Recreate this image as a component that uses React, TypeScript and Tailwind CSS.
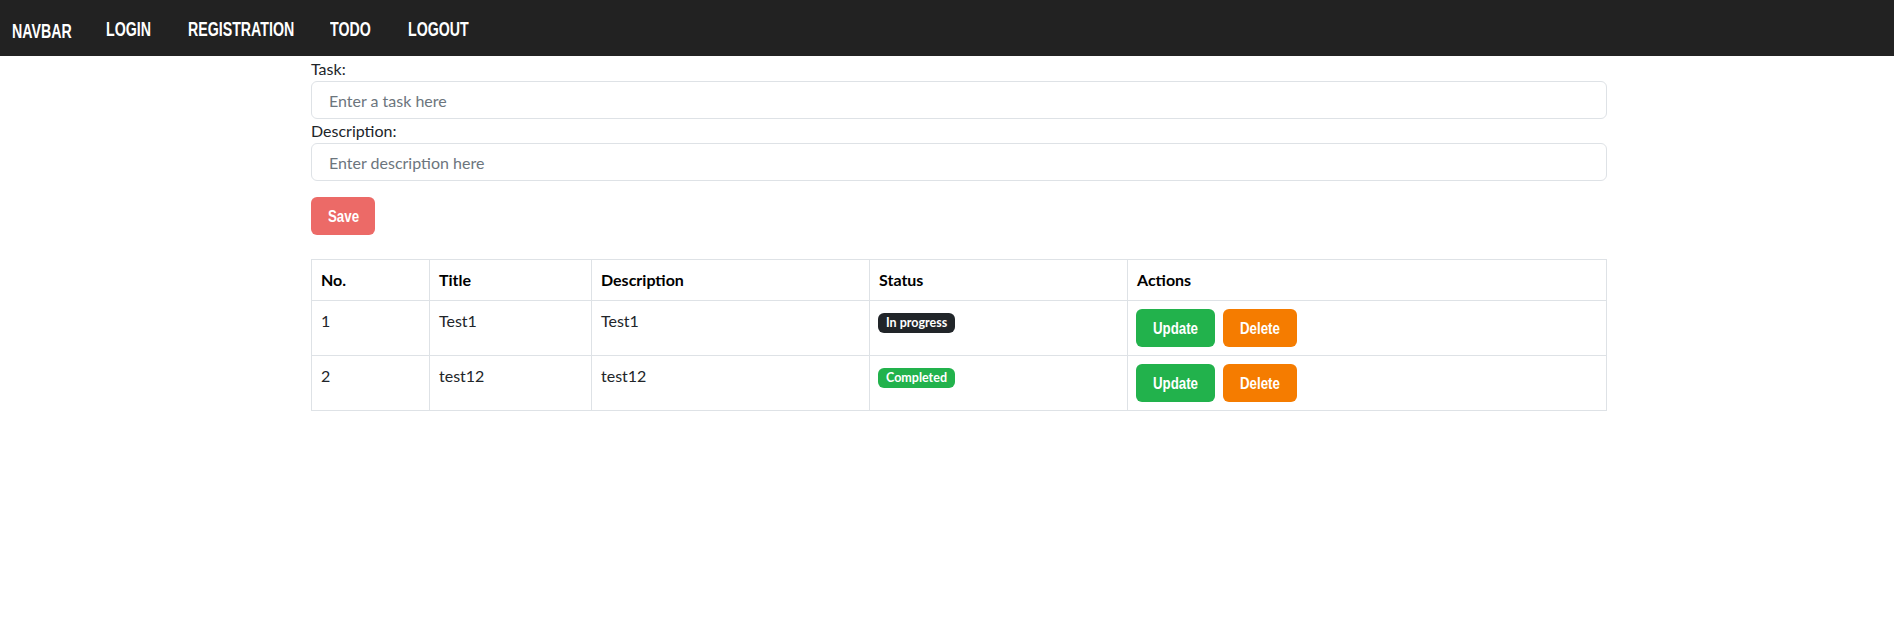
import React from "react";

function Narrow({ w, scale, children }: { w: string; scale: "nav" | "btn"; children: React.ReactNode }) {
  return (
    <span className={`inline-block overflow-visible whitespace-nowrap ${w}`}>
      <span
        className={
          scale === "nav"
            ? "inline-block origin-left scale-x-[0.71] font-['Liberation_Sans',sans-serif] font-bold"
            : "inline-block origin-left scale-x-[0.83] font-['Liberation_Sans',sans-serif] font-bold"
        }
      >
        {children}
      </span>
    </span>
  );
}

function Nav() {
  return (
    <nav className="h-[56px] bg-[#222222] flex items-center pl-[12px] text-white text-[20px]">
      <span className="mt-[4px] mr-[34px]">
        <Narrow w="w-[60px]" scale="nav">NAVBAR</Narrow>
      </span>
      <span className="mr-[37px]">
        <Narrow w="w-[45px]" scale="nav">LOGIN</Narrow>
      </span>
      <span className="mr-[36px]">
        <Narrow w="w-[106px]" scale="nav">REGISTRATION</Narrow>
      </span>
      <span className="mr-[36px]">
        <Narrow w="w-[42px]" scale="nav">TODO</Narrow>
      </span>
      <span>
        <Narrow w="w-[62px]" scale="nav">LOGOUT</Narrow>
      </span>
    </nav>
  );
}

function BtnText({ w, children }: { w: string; children: React.ReactNode }) {
  return <Narrow w={w} scale="btn">{children}</Narrow>;
}

const rows = [
  { no: 1, title: "Test1", desc: "Test1", status: "In progress" },
  { no: 2, title: "test12", desc: "test12", status: "Completed" },
];

export default function App() {
  return (
    <div className="min-h-[617px] bg-white text-[#212529] font-['Lato','Noto_Sans',sans-serif] text-[16px]">
      <Nav />
      <div className="w-[1320px] mx-auto pl-[24px]">
        <label className="block leading-[24px] mt-[1px]">Task:</label>
        <input
          className="block w-full h-[38px] border border-[#dee2e6] rounded-[6px] px-[17px] placeholder:text-[#6c757d] outline-none"
          placeholder="Enter a task here"
        />
        <label className="block leading-[24px]">Description:</label>
        <input
          className="block w-full h-[38px] border border-[#dee2e6] rounded-[6px] px-[17px] placeholder:text-[#6c757d] outline-none"
          placeholder="Enter description here"
        />
        <button className="mt-[16px] h-[38px] w-[64px] rounded-[6px] bg-[#ec6a67] text-white text-[16px] flex items-center justify-center">
          <BtnText w="w-[31px]">Save</BtnText>
        </button>
        <table className="mt-[24px] w-[1296px] border-collapse border border-[#dee2e6] table-fixed">
          <colgroup>
            <col className="w-[118px]" />
            <col className="w-[162px]" />
            <col className="w-[278px]" />
            <col className="w-[258px]" />
            <col />
          </colgroup>
          <thead>
            <tr className="h-[41px]">
              {["No.", "Title", "Description", "Status", "Actions"].map((h) => (
                <th key={h} className="border border-[#dee2e6] px-[9px] py-[8px] text-left font-bold text-black leading-[24px]">
                  {h}
                </th>
              ))}
            </tr>
          </thead>
          <tbody>
            {rows.map((r) => (
              <tr key={r.no} className="h-[55px]">
                <td className="border border-[#dee2e6] px-[9px] py-[8px] align-top leading-[24px]">{r.no}</td>
                <td className="border border-[#dee2e6] px-[9px] py-[8px] align-top leading-[24px]">{r.title}</td>
                <td className="border border-[#dee2e6] px-[9px] py-[8px] align-top leading-[24px]">{r.desc}</td>
                <td className="border border-[#dee2e6] px-[8px] py-[8px] align-top leading-[24px]">
                  <span
                    className={
                      r.status === "In progress"
                        ? "inline-flex items-center h-[20px] px-[8px] rounded-[6px] bg-[#212529] text-white text-[12.5px] font-bold leading-none align-[2px] mt-[4px]"
                        : "inline-flex items-center h-[20px] px-[8px] rounded-[6px] bg-[#22b24c] text-white text-[12.5px] font-bold leading-none align-[2px] mt-[4px]"
                    }
                  >
                    {r.status}
                  </span>
                </td>
                <td className="border border-[#dee2e6] px-[8px] py-[8px] align-top">
                  <div className="flex gap-[8px]">
                    <button className="h-[38px] w-[79px] rounded-[6px] bg-[#22b24c] text-white text-[16px] flex items-center justify-center">
                      <BtnText w="w-[46px]">Update</BtnText>
                    </button>
                    <button className="h-[38px] w-[74px] rounded-[6px] bg-[#f57c00] text-white text-[16px] flex items-center justify-center">
                      <BtnText w="w-[40px]">Delete</BtnText>
                    </button>
                  </div>
                </td>
              </tr>
            ))}
          </tbody>
        </table>
      </div>
    </div>
  );
}
